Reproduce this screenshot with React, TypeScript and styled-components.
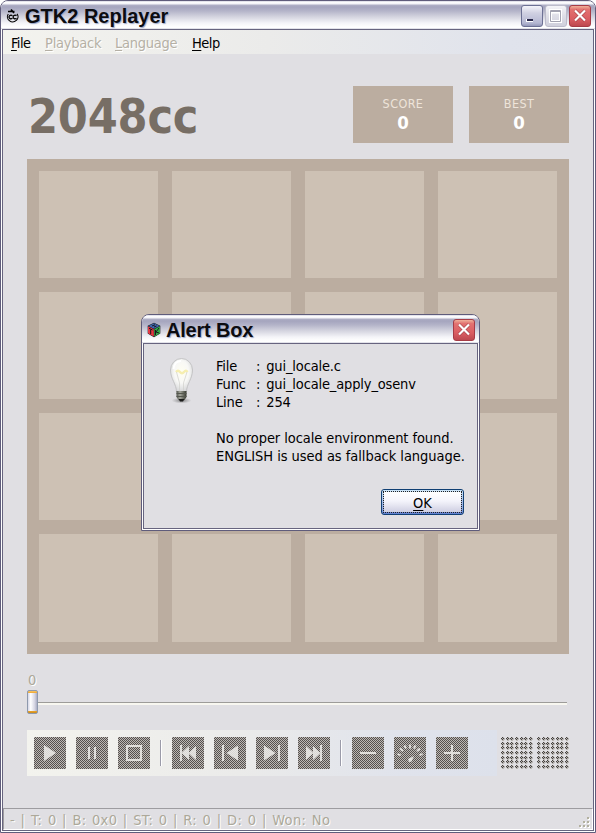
import React from 'react';
import styled, { createGlobalStyle, css } from 'styled-components';

const tahoma = '"DejaVu Sans Condensed", "DejaVu Sans", sans-serif';

const Global = createGlobalStyle`
  * { box-sizing: border-box; }
  html, body { margin: 0; padding: 0; }
  body { background: #e0dfe3; overflow: hidden; }
`;

const Desktop = styled.div`
  position: relative;
  width: 596px;
  height: 833px;
  background: #fff;
  font-family: ${tahoma};
  font-stretch: condensed;
  font-size: 14.5px;
  color: #000;
  white-space: nowrap;
`;

const frame = css`
  display: flex;
  flex-direction: column;
  border: 1px solid #5f5c7b;
  border-radius: 8px 8px 0 0;
  background: #fff;
  overflow: hidden;
`;

const MainWindow = styled.div`
  ${frame}
  width: 596px;
  height: 833px;
`;

const Dialog = styled.div`
  ${frame}
  position: absolute;
  left: 141px;
  top: 314px;
  width: 339px;
  height: 217px;
`;

const TitleBar = styled.div`
  flex: none;
  height: 28px;
  display: flex;
  align-items: center;
  padding: 1px 4px 0 5px;
  background: linear-gradient(#c8c8d8 0, #ffffff 1px, #f2f2f7 3px, #b0b0c6 4px, #a5a5be 6px, #b4b4c9 10px, #d5d5e0 16px, #f4f4f8 22px, #ffffff 26px, #ffffff 27px, #c5c5d4 28px);
`;

const TitleText = styled.div<{ $ls: number }>`
  flex: 1;
  margin-left: 5px;
  font: bold 20px/26px "Liberation Sans", Arial, sans-serif;
  letter-spacing: ${p => p.$ls}px;
  color: #0c0c10;
  text-shadow: 1px 1px 1px #9aa7c8;
`;

const CaptionButton = styled.div<{ $kind: 'min' | 'max' | 'close' }>`
  width: 22px;
  height: 22px;
  margin: 1px 0 0 2px;
  border-radius: 3px;
  border: 1px solid ${p => ({ min: '#6c7094', max: '#bcbccb', close: '#a63b46' }[p.$kind])};
  background: ${p =>
    ({
      min: 'linear-gradient(#f4f4fa, #d0d0e2 35%, #b5b7d2 85%, #9498b9)',
      max: 'linear-gradient(#f4f4f8, #dedee7 50%, #d0d0dc)',
      close: 'linear-gradient(#eeb09a, #e27170 18%, #da5d62 65%, #bd4850)',
    }[p.$kind])};
  svg { display: block; }
`;

const Client = styled.div`
  flex: 1;
  min-height: 0;
  display: flex;
  flex-direction: column;
  margin: 0 1px 1px;
  border: 1px solid #67647f;
  background: #e0dfe3;
`;

const MenuBar = styled.div`
  flex: none;
  height: 24px;
  display: flex;
  padding: 4px 0 0 8px;
  line-height: 19px;
  background: linear-gradient(90deg, #f3f3ee, #ebebea 45%, #e0e3ec 85%, #dfe2eb);
`;

const MenuItem = styled.div<{ $w: number; $ls: number; $off?: boolean }>`
  width: ${p => p.$w}px;
  letter-spacing: ${p => p.$ls}px;
  ${p => p.$off && 'color: #b5b0a5; text-shadow: 1px 1px 0 #fff;'}
`;

const Key = styled.span`
  text-decoration: underline;
  text-underline-offset: 2px;
  text-decoration-thickness: 1px;
`;

const Header = styled.div`
  flex: none;
  display: flex;
  height: 57px;
  margin: 32px 24px 16px 24px;
`;

const GameTitle = styled.div`
  flex: 1;
  padding: 2px 0 0 1px;
  font-size: 48px;
  line-height: 56px;
  font-weight: bold;
  letter-spacing: -0.2px;
  color: #776e65;
`;

const Score = styled.div`
  width: 100px;
  margin-left: 16px;
  padding-top: 9px;
  background: #bbada0;
  color: #eee4da;
  font-size: 12.5px;
  letter-spacing: 0.4px;
  line-height: 18px;
  text-align: center;
`;

const ScoreValue = styled.div`
  color: #fff;
  font-size: 18.5px;
  letter-spacing: 0;
  font-weight: bold;
  line-height: 20px;
`;

const Board = styled.div`
  flex: none;
  display: grid;
  grid-template: 107px 107px 107px 108px / repeat(4, 119px);
  gap: 14px;
  width: 542px;
  height: 495px;
  margin-left: 24px;
  padding: 12px;
  background: #bbada0;
`;

const Cell = styled.div`
  background: #cdc1b4;
`;

const Seek = styled.div`
  flex: none;
  height: 76px;
  padding: 17px 26px 0 24px;
`;

const SeekLabel = styled.div`
  padding-left: 1px;
  height: 19px;
  line-height: 18px;
  color: #aca899;
  text-shadow: 1px 1px 0 #fff;
`;

const Track = styled.div`
  height: 24px;
  display: flex;
  align-items: center;
  &::after {
    content: '';
    flex: 1;
    height: 2px;
    margin-top: 2px;
    border-top: 1px solid #9d9c99;
    background: #f8f7f0;
  }
`;

const Thumb = styled.div`
  width: 11px;
  height: 24px;
  border: 1px solid #8e99ad;
  border-radius: 2px;
  background:
    linear-gradient(#f8c66a, #eda52e) 0 0 / 100% 2px no-repeat,
    linear-gradient(#eda52e, #c98b1c) 0 100% / 100% 2px no-repeat,
    linear-gradient(90deg, #d5d6e6, #fff 30%, #d4d4e2 75%, #a9adc2);
`;

const ControlRow = styled.div`
  flex: none;
  display: flex;
  align-items: center;
  height: 46px;
  margin-left: 24px;
`;

const ToolStrip = styled.div`
  display: flex;
  align-items: center;
  gap: 10px;
  width: 470px;
  height: 46px;
  padding-left: 7px;
  margin-right: 4px;
  background: linear-gradient(90deg, #f3f3ee, #ebebea 45%, #e0e3ec 80%, #dde1eb);
`;

const ToolButton = styled.div`
  width: 32px;
  height: 32px;
  background: conic-gradient(#55504e 25%, #bdb9b5 0 50%, #55504e 0 75%, #bdb9b5 0) 0 0 / 2px 2px;
  svg { display: block; }
`;

const Separator = styled.div`
  width: 2px;
  height: 26px;
  background: linear-gradient(90deg, #9b9ba9 1px, #fff 1px);
`;

const DotPad = styled.svg`
  display: block;
  margin-right: 4px;
`;

const StatusBar = styled.div`
  display: flex;
  justify-content: space-between;
  height: 22px;
  margin-top: auto;
  padding-left: 6px;
  border-top: 1px solid #9d9ca0;
  border-bottom: 1px solid #fff;
  border-left: 1px solid #9d9ca0;
  border-right: 1px solid #fff;
  line-height: 22px;
  color: #aca899;
  text-shadow: 1px 1px 0 #fff;
  letter-spacing: 0.35px;
  word-spacing: 1.05px;
`;

const Grip = styled.svg`
  align-self: flex-end;
  margin-right: 1px;
`;

const AlertBody = styled.div`
  display: flex;
  height: 145px;
  padding: 13px 0 0 16px;
`;

const BulbBox = styled.div`
  width: 56px;
  svg { display: block; margin-left: -1px; }
`;

const Message = styled.div`
  line-height: 18px;
`;

const Fact = styled.div`
  display: grid;
  grid-template-columns: 40px 1fr;
  letter-spacing: -0.15px;
  word-spacing: 2px;
`;

const Line = styled.div<{ $ls: number }>`
  letter-spacing: ${p => p.$ls}px;
`;

const Gap = styled.div`
  height: 18px;
`;

const OkButton = styled.div`
  align-self: flex-end;
  width: 83px;
  height: 26px;
  margin-right: 13px;
  border: 1px solid #103f73;
  border-radius: 3px;
  padding: 1px;
  background: linear-gradient(#cbe4f7, #8ba4dd 80%, #5f7fd0);
`;

const OkFace = styled.div`
  height: 22px;
  border: 1px dotted #222;
  background: linear-gradient(#fff, #f4f4fb 45%, #cfcfe2);
  background-clip: padding-box;
  line-height: 22px;
  text-align: center;
`;

const CloseGlyph = () => (
  <svg width="20" height="20" viewBox="0 0 20 20">
    <path d="M5 4.5L15 14.5M15 4.5L5 14.5" stroke="#7a2830" strokeWidth="3.4" opacity=".55" />
    <path d="M5 4.5L15 14.5M15 4.5L5 14.5" stroke="#fff" strokeWidth="2.2" />
  </svg>
);

const AppIcon = () => (
  <svg width="14" height="16" viewBox="0 0 14 16" fill="none" stroke="#000">
    <path d="M2.300 6A5.300 5 0 1 0 11 5.800" strokeWidth="1.1" />
    <path d="M6.400 7.700A2 1.800 0 1 0 6.400 10.300M10.500 7.700A2 1.800 0 1 0 10.500 10.300" strokeWidth="1.3" />
    <path d="M2 3.500L8.500 3.500M5 1.500L8 5" strokeWidth="1.7" />
  </svg>
);

const GtkIcon = () => (
  <svg width="14" height="16" viewBox="0 0 14 16">
    <path d="M7 .8L13.3 3.8V11.5L7 15.3L.7 11.5V3.8Z" fill="#16181c" />
    <path d="M1 4.3L6.8 7.2V14.6L1 11.2Z" fill="#e53642" />
    <path d="M13 4.3L7.3 7.2V14.6L13 11.2Z" fill="#35a847" />
    <path d="M7 1.2L12.6 3.9L7 6.7L1.4 3.9Z" fill="#4165ad" />
    <path d="M2 6.300L5.500 8M3.700 7.500V12M8.500 8V13M12 6L9 10L12 11M5 4L8 2.800M7 5L9.500 4" stroke="#15171b" strokeWidth="1" fill="none" />
  </svg>
);

const Bulb = () => (
  <svg width="46" height="50" viewBox="0 0 46 50">
    <defs>
      <radialGradient id="glass" cx=".5" cy=".4" r=".6">
        <stop offset="0" stopColor="#fffef2" />
        <stop offset=".55" stopColor="#f8f8f6" />
        <stop offset="1" stopColor="#d5d6d8" />
      </radialGradient>
      <radialGradient id="ground">
        <stop offset="0" stopColor="#555" stopOpacity=".7" />
        <stop offset="1" stopColor="#777" stopOpacity="0" />
      </radialGradient>
      <linearGradient id="base">
        <stop offset="0" stopColor="#50524a" />
        <stop offset=".35" stopColor="#a5a79d" />
        <stop offset="1" stopColor="#35382f" />
      </linearGradient>
    </defs>
    <ellipse cx="22.5" cy="43.5" rx="10" ry="3" fill="url(#ground)" />
    <path d="M17.5 35C17.5 27 11.5 22 11.5 13A11 11.5 0 0 1 33.500 13C33.500 22 27.500 27 27.500 35Z" fill="url(#glass)" stroke="#bfc0c1" strokeWidth=".9" />
    <path d="M17 15Q19 12.500 21 15T25 15T28.500 15" fill="none" stroke="#f6eeb0" strokeWidth="2.4" />
    <path d="M17.500 15L20.500 26V34M28 15L24.500 26V34" fill="none" stroke="#d0d0cc" strokeWidth=".7" />
    <path d="M14.500 12C15 7 18 4 22 4" fill="none" stroke="#fff" strokeWidth="2" />
    <path d="M17.500 34H27.500V40L25.500 43H19.500L17.500 40Z" fill="url(#base)" />
    <path d="M17.500 36.500H27.500M17.500 39.500H27.500" stroke="#55584f" />
    <path d="M19.500 42H25.500L24 44.500H21Z" fill="#1b1c1b" />
  </svg>
);

const glyphs: Record<string, React.ReactNode> = {
  play: <path d="M10 8L22 16L10 24Z" />,
  pause: <path d="M12 10H14V22H12ZM18 10H20V22H18Z" />,
  stop: <path fillRule="evenodd" d="M8 8H24V24H8ZM10 10V22H22V10Z" />,
  first: <path d="M8 8H10V24H8ZM17 9V23L9.500 16ZM24 9V23L16.500 16Z" />,
  prev: <path d="M8 8H10V24H8ZM24 8.500V23.500L12.500 16Z" />,
  next: <path d="M22 8H24V24H22ZM8 8.500V23.500L19.500 16Z" />,
  last: <path d="M22 8H24V24H22ZM8 9V23L15.500 16ZM15 9V23L22.500 16Z" />,
  minus: <path d="M8 15H24V17H8Z" />,
  gauge: (
    <>
      <path d="M3.500 17L6.500 18.200M6 11.500L9 14M10.500 8.500L12 11.500M16 7.500V11.500M21.500 8.500L20 11.500M26 11.500L23 14M28.500 17L25.500 18.200" fill="none" stroke="#f0efec" strokeWidth="1.8" />
      <path d="M14 22L20 19L17.500 24.500L15 25Z" />
    </>
  ),
  plus: <path d="M8 15H15V8H17V15H24V17H17V24H15V17H8Z" />,
};

const Tool = ({ name }: { name: string }) => (
  <ToolButton>
    <svg width="32" height="32" fill="#f0efec" opacity=".85">
      {glyphs[name]}
    </svg>
  </ToolButton>
);

const centers = [2, 7, 11, 16, 21, 25, 30];

const Dots = () => (
  <DotPad width="32" height="32" shapeRendering="crispEdges">
    {centers.map(y =>
      centers.map(x => (
        <g key={`${x}-${y}`}>
          <path d={`M${x - 2} ${y - 1}h1v-1h2v1h1v2h-1v1h-2v-1h-1z`} fill="#b9b6b4" />
          <path d={`M${x - 1} ${y - 2}h1v1h-1zM${x} ${y - 1}h1v1h-1zM${x - 2} ${y - 1}h1v1h-1zM${x - 1} ${y}h1v1h-1z`} fill="#45413f" />
        </g>
      )),
    )}
  </DotPad>
);

const gripDots = [[8, 0], [4, 4], [8, 4], [0, 8], [4, 8], [8, 8]];

export default function App() {
  return (
    <Desktop>
      <Global />
      <MainWindow>
        <TitleBar>
          <AppIcon />
          <TitleText $ls={0}>GTK2 Replayer</TitleText>
          <CaptionButton $kind="min">
            <svg width="20" height="20">
              <path d="M4 13H11V16H4Z" fill="#fff" />
              <path d="M5 13H11V15H5Z" fill="#29274a" />
            </svg>
          </CaptionButton>
          <CaptionButton $kind="max">
            <svg width="20" height="20">
              <path d="M4.500 4.500H14.500V15.500H4.500ZM4 6H15" fill="none" stroke="#fff" strokeWidth="3" />
              <path d="M4.500 4.500H14.500V15.500H4.500ZM4 5.500H15" fill="none" stroke="#a2a2b0" />
            </svg>
          </CaptionButton>
          <CaptionButton $kind="close"><CloseGlyph /></CaptionButton>
        </TitleBar>
        <Client>
          <MenuBar>
            <MenuItem $w={34} $ls={-0.6}><Key>F</Key>ile</MenuItem>
            <MenuItem $w={70} $ls={-0.25} $off><Key>P</Key>layback</MenuItem>
            <MenuItem $w={77} $ls={-0.25} $off><Key>L</Key>anguage</MenuItem>
            <MenuItem $w={40} $ls={-0.5}><Key>H</Key>elp</MenuItem>
          </MenuBar>
          <Header>
            <GameTitle>2048cc</GameTitle>
            <Score>SCORE<ScoreValue>0</ScoreValue></Score>
            <Score>BEST<ScoreValue>0</ScoreValue></Score>
          </Header>
          <Board>
            {Array.from({ length: 16 }, (_, i) => <Cell key={i} />)}
          </Board>
          <Seek>
            <SeekLabel>0</SeekLabel>
            <Track><Thumb /></Track>
          </Seek>
          <ControlRow>
            <ToolStrip>
              <Tool name="play" />
              <Tool name="pause" />
              <Tool name="stop" />
              <Separator />
              <Tool name="first" />
              <Tool name="prev" />
              <Tool name="next" />
              <Tool name="last" />
              <Separator />
              <Tool name="minus" />
              <Tool name="gauge" />
              <Tool name="plus" />
            </ToolStrip>
            <Dots />
            <Dots />
          </ControlRow>
          <StatusBar>
            <span>- | T: 0 | B: 0x0 | ST: 0 | R: 0 | D: 0 | Won: No</span>
            <Grip width="12" height="12" shapeRendering="crispEdges">
              {gripDots.map(([x, y]) => (
                <g key={`${x}-${y}`}>
                  <rect x={x + 1} y={y + 1} width="2" height="2" fill="#fff" />
                  <rect x={x} y={y} width="2" height="2" fill="#b2b09f" />
                </g>
              ))}
            </Grip>
          </StatusBar>
        </Client>
      </MainWindow>
      <Dialog>
        <TitleBar>
          <GtkIcon />
          <TitleText $ls={-0.2}>Alert Box</TitleText>
          <CaptionButton $kind="close"><CloseGlyph /></CaptionButton>
        </TitleBar>
        <Client>
          <AlertBody>
            <BulbBox><Bulb /></BulbBox>
            <Message>
              <Fact><span>File</span><span>: gui_locale.c</span></Fact>
              <Fact><span>Func</span><span>: gui_locale_apply_osenv</span></Fact>
              <Fact><span>Line</span><span>: 254</span></Fact>
              <Gap />
              <Line $ls={-0.08}>No proper locale environment found.</Line>
              <Line $ls={-0.04}>ENGLISH is used as fallback language.</Line>
            </Message>
          </AlertBody>
          <OkButton><OkFace><Key>O</Key>K</OkFace></OkButton>
        </Client>
      </Dialog>
    </Desktop>
  );
}
